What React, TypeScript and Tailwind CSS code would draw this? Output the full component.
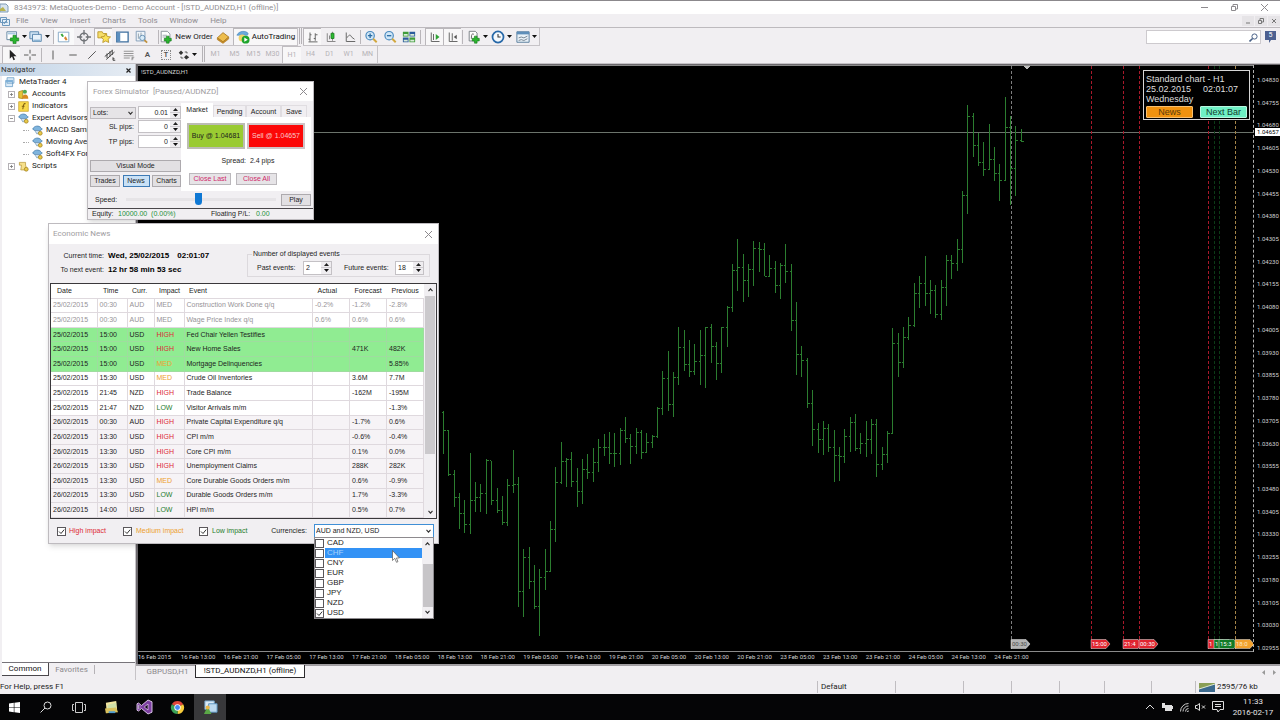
import type { ReactNode } from 'react';
import clsx from 'clsx';

// [high, low, close] of each hourly bar, in chart pixels
const BARS: [number, number, number][] = [
    [345, 388, 364], [364, 410, 408], [404, 441, 431], [427, 463, 447], [434, 467, 458],
    [387, 468, 434], [416, 446, 431], [418, 446, 427], [393, 448, 394], [395, 439, 434],
    [422, 447, 444], [430, 459, 456], [413, 460, 419], [384, 427, 418], [411, 541, 525],
    [483, 551, 491], [481, 523, 515], [499, 543, 540], [503, 570, 511], [483, 524, 505],
    [455, 506, 463], [401, 476, 416], [376, 418, 395], [392, 421, 393], [386, 421, 415],
    [402, 441, 425], [393, 438, 403], [388, 413, 406], [382, 416, 396], [373, 406, 381],
    [368, 390, 381], [366, 398, 387], [367, 401, 387], [362, 399, 364], [351, 377, 372],
    [368, 398, 380], [362, 388, 366], [364, 393, 386], [367, 387, 376], [369, 382, 370],
    [341, 372, 342], [305, 349, 312], [285, 345, 338], [306, 351, 311], [261, 319, 281],
    [264, 305, 298], [274, 311, 305], [278, 309, 295], [264, 319, 289], [261, 322, 261],
    [258, 297, 280], [276, 314, 297], [261, 307, 261], [240, 281, 241], [198, 246, 204],
    [173, 225, 201], [188, 236, 214], [198, 231, 203], [175, 220, 182], [176, 206, 183],
    [177, 210, 210], [189, 211, 202], [195, 227, 219], [197, 233, 199], [178, 217, 205],
    [198, 265, 254], [236, 309, 288], [280, 311, 294], [292, 342, 337], [324, 380, 363],
    [357, 387, 373], [355, 389, 362], [358, 386, 381], [364, 416, 389], [381, 415, 390],
    [363, 397, 370], [351, 386, 356], [348, 385, 382], [367, 388, 377], [355, 391, 373],
    [353, 388, 358], [353, 411, 398], [381, 404, 388], [365, 397, 367], [262, 368, 277],
    [267, 311, 296], [261, 302, 271], [251, 274, 259], [217, 261, 227], [210, 242, 217],
    [190, 240, 227], [214, 248, 224], [219, 252, 248], [214, 254, 221], [189, 240, 194],
    [189, 213, 197], [173, 205, 183], [125, 197, 129], [39, 148, 50], [47, 91, 79],
    [67, 100, 96], [76, 110, 103], [58, 104, 93], [81, 115, 107], [98, 135, 114],
    [31, 115, 61], [50, 139, 102], [60, 130, 74], [63, 76, 75],
];

// labels of flags that sit under their neighbour are cut short
const FLAGS = [
    { x: 873, time: '00:30', fill: '#b4b4b4', ink: '#4b4b4b', line: '#7d7d7d' },
    { x: 953, time: '15:00', fill: '#e0242f', ink: '#ffffff', line: '#a8182a' },
    { x: 985, time: '21:4', fill: '#e0242f', ink: '#ffffff', line: '#a8182a' },
    { x: 1001, time: '00:30', fill: '#e0242f', ink: '#ffffff', line: '#a8182a' },
    { x: 1070, time: '1', fill: '#e0242f', ink: '#ffffff', line: '#a8182a' },
    { x: 1076, time: '1', fill: '#117a26', ink: '#ffffff', line: '#0c3a16' },
    { x: 1081, time: '15:3', fill: '#117a26', ink: '#ffffff', line: '#0c3a16' },
    { x: 1097, time: '18:0', fill: '#f2a12e', ink: '#ffe9c0', line: '#a5854a' },
];

const TIMES = [
    '16 Feb 2015', '16 Feb 13:00', '16 Feb 21:00', '17 Feb 05:00', '17 Feb 13:00', '17 Feb 21:00',
    '18 Feb 05:00', '18 Feb 13:00', '18 Feb 21:00', '19 Feb 05:00', '19 Feb 13:00', '19 Feb 21:00',
    '20 Feb 05:00', '20 Feb 13:00', '20 Feb 21:00', '23 Feb 05:00', '23 Feb 13:00', '23 Feb 21:00',
    '24 Feb 05:00', '24 Feb 13:00', '24 Feb 21:00',
];

const PRICES = Array.from({ length: 26 }, (_, i) => (1.0483 - i * 0.00075).toFixed(5));

const EVENTS = [
    ['25/02/2015', '00:30', 'AUD', 'MED', 'Construction Work Done q/q', '-0.2%', '-1.2%', '-2.8%', 'past'],
    ['25/02/2015', '00:30', 'AUD', 'MED', 'Wage Price Index q/q', '0.6%', '0.6%', '0.6%', 'past'],
    ['25/02/2015', '15:00', 'USD', 'HIGH', 'Fed Chair Yellen Testifies', '', '', '', 'next'],
    ['25/02/2015', '15:00', 'USD', 'HIGH', 'New Home Sales', '', '471K', '482K', 'next'],
    ['25/02/2015', '15:00', 'USD', 'MED', 'Mortgage Delinquencies', '', '', '5.85%', 'next'],
    ['25/02/2015', '15:30', 'USD', 'MED', 'Crude Oil Inventories', '', '3.6M', '7.7M', 'today'],
    ['25/02/2015', '21:45', 'NZD', 'HIGH', 'Trade Balance', '', '-162M', '-195M', 'today'],
    ['25/02/2015', '21:47', 'NZD', 'LOW', 'Visitor Arrivals m/m', '', '', '-1.3%', 'today'],
    ['26/02/2015', '00:30', 'AUD', 'HIGH', 'Private Capital Expenditure q/q', '', '-1.7%', '0.6%', 'later'],
    ['26/02/2015', '13:30', 'USD', 'HIGH', 'CPI m/m', '', '-0.6%', '-0.4%', 'later'],
    ['26/02/2015', '13:30', 'USD', 'HIGH', 'Core CPI m/m', '', '0.1%', '0.0%', 'later'],
    ['26/02/2015', '13:30', 'USD', 'HIGH', 'Unemployment Claims', '', '288K', '282K', 'later'],
    ['26/02/2015', '13:30', 'USD', 'MED', 'Core Durable Goods Orders m/m', '', '0.6%', '-0.9%', 'later'],
    ['26/02/2015', '13:30', 'USD', 'LOW', 'Durable Goods Orders m/m', '', '1.7%', '-3.3%', 'later'],
    ['26/02/2015', '14:00', 'USD', 'LOW', 'HPI m/m', '', '0.5%', '0.7%', 'later'],
];

const IMPACT_COLORS: Record<string, string> = {
    HIGH: 'text-[#dd2a35]',
    MED: 'text-[#eda02f]',
    LOW: 'text-[#1f7d2c]',
};

const ROW_COLORS: Record<string, string> = {
    past: 'text-[#969397]',
    next: 'bg-[#90ec92]',
    today: 'bg-white',
    later: 'bg-[#f6f3f6]',
};

const CURRENCIES = ['CAD', 'CHF', 'CNY', 'EUR', 'GBP', 'JPY', 'NZD', 'USD'];

/* ---------- small shared pieces ---------- */

function Svg({ size = 14, children }: { size?: number; children: ReactNode }) {
    return (
        <svg width={size} height={size} viewBox="0 0 16 16" fill="none" className="shrink-0">
            {children}
        </svg>
    );
}

function Caret() {
    return (
        <svg width="5" height="3" viewBox="0 0 5 3" className="shrink-0">
            <path d="M0 0h5L2.5 3z" fill="#111" />
        </svg>
    );
}

function Chevron({ up = false }: { up?: boolean }) {
    return (
        <svg width="5" height="4" viewBox="0 0 5 4" fill="none" className="shrink-0">
            <path d={up ? 'M.5 3.2l2-2.4 2 2.4' : 'M.5.8l2 2.4 2-2.4'} stroke="#333" strokeWidth="1.1" />
        </svg>
    );
}

function Separator() {
    return <span className="h-3.5 w-px shrink-0 bg-[#b9b6ba]" />;
}

function Grip() {
    return <span className="mx-px h-4 w-[3px] shrink-0 border-x border-[#b5b2b6]" />;
}

function ToolButton({ label, className, pressed, menu, children }: {
    label: string;
    className?: string;
    pressed?: boolean;
    menu?: boolean;
    children: ReactNode;
}) {
    return (
        <button
            type="button"
            aria-label={label}
            aria-pressed={pressed}
            className={clsx(
                'flex h-full shrink-0 items-center justify-center whitespace-nowrap',
                menu && 'gap-0.5',
                pressed && 'border-t border-l border-[#bab7bb] bg-[#f8f7f8]',
                className,
            )}
        >
            {children}
            {menu && <Caret />}
        </button>
    );
}

function CloseX({ className }: { className?: string }) {
    return (
        <button type="button" aria-label="Close" className={className}>
            <svg width="7" height="7" viewBox="0 0 7 7">
                <path d="M0 0l7 7M7 0L0 7" stroke="#8d8a8e" />
            </svg>
        </button>
    );
}

function CheckBox({ id, checked, className }: { id: string; checked?: boolean; className: string }) {
    return (
        <span className={clsx('relative shrink-0', className)}>
            <input
                id={id}
                type="checkbox"
                defaultChecked={checked}
                className="peer block size-full appearance-none border border-[#5a575b] bg-white"
            />
            <svg viewBox="0 0 9 9" fill="none" className="pointer-events-none absolute inset-0 hidden size-full peer-checked:block">
                <path d="M2 4.5l2 2L7.2 2.6" stroke="#333" strokeWidth="1" />
            </svg>
        </span>
    );
}

function SpinBox({ id, value, label, className, inputClass }: {
    id: string;
    value: string;
    label?: string;
    className: string;
    inputClass: string;
}) {
    return (
        <span className={clsx('flex border border-[#c4c1c5] bg-white', className)}>
            <input
                id={id}
                type="text"
                aria-label={label}
                defaultValue={value}
                className={clsx('h-full min-w-0 flex-1 px-0.5 leading-[11px] outline-none', inputClass)}
            />
            <span className="flex w-2.5 shrink-0 flex-col bg-[#efedf0]">
                <button type="button" aria-label="Increase" className="flex flex-1 items-center justify-center">
                    <svg width="5" height="3" viewBox="0 0 5 3"><path d="M0 3h5L2.5 0z" fill="#222" /></svg>
                </button>
                <button type="button" aria-label="Decrease" className="flex flex-1 items-center justify-center border-t border-[#cfccd0]">
                    <Caret />
                </button>
            </span>
        </span>
    );
}

function PushButton({ className, children }: { className: string; children: ReactNode }) {
    return (
        <button type="button" className={clsx('h-3 border text-center leading-[10px]', className)}>
            {children}
        </button>
    );
}

/* ---------- main window chrome ---------- */

function TitleBar() {
    return (
        <header className="flex h-3.5 items-center border-t border-[#8b888c] bg-white text-[#939094]">
            <svg width="10" height="10" viewBox="0 0 10 10" className="mr-1">
                <path d="M0 1h6l2 2v6H0z" fill="#d7e3ee" stroke="#7f9bb5" />
                <path d="M0 6l3-2 3 4H0z" fill="#b8b34f" />
            </svg>
            <h1 className="text-[8px] leading-3">8343973: MetaQuotes-Demo - Demo Account - [!STD_AUDNZD,H1 (offline)]</h1>
            <div className="ml-auto flex items-center">
                <button type="button" aria-label="Minimize" className="flex w-[29px] justify-center">
                    <svg width="7" height="7" viewBox="0 0 7 7"><path d="M0 3.5h7" stroke="#8d8a8e" /></svg>
                </button>
                <button type="button" aria-label="Restore" className="flex w-[30px] justify-center">
                    <svg width="7" height="7" viewBox="0 0 7 7" fill="none"><path d="M.5 2.5h4v4h-4zM2 2V.5h4.5V5H5" stroke="#8d8a8e" /></svg>
                </button>
                <CloseX className="flex w-[31px] justify-center" />
            </div>
        </header>
    );
}

function MenuBar() {
    return (
        <nav className="flex h-[13px] items-center bg-[#f1eff2] text-[8px] leading-3 text-[#908d91]">
            <span className="mr-1.5 flex w-2.5">
                <svg width="10" height="10" viewBox="0 0 10 10" fill="none">
                    <path d="M.5 1.5h6v5h-6zM2.5 3.5h7v6h-7z" fill="#e4eef7" stroke="#6c97bd" />
                    <path d="M4 8l2-3 1.5 2" stroke="#6c97bd" />
                </svg>
            </span>
            <ul className="flex gap-3">
                {['File', 'View', 'Insert', 'Charts', 'Tools', 'Window', 'Help'].map((item) => (
                    <li key={item}><button type="button">{item}</button></li>
                ))}
            </ul>
            <div className="ml-auto flex gap-px">
                <button type="button" aria-label="Minimize chart" className="flex h-2.5 w-3 items-center justify-center bg-[#e6e4e7]">
                    <svg width="6" height="6" viewBox="0 0 6 6"><path d="M1 5h4" stroke="#777" /></svg>
                </button>
                <button type="button" aria-label="Restore chart" className="flex h-2.5 w-3 items-center justify-center bg-[#e6e4e7]">
                    <svg width="6" height="6" viewBox="0 0 6 6" fill="none"><path d="M.5 2.5h3v3h-3zM2 2V.5h3.5V4H4" stroke="#777" /></svg>
                </button>
                <button type="button" aria-label="Close chart" className="flex h-2.5 w-3 items-center justify-center bg-[#e6e4e7]">
                    <svg width="6" height="6" viewBox="0 0 6 6"><path d="M1 1l4 4M5 1L1 5" stroke="#777" /></svg>
                </button>
            </div>
        </nav>
    );
}

function StandardToolbar() {
    return (
        <div className="flex h-[19px] border-t border-[#bdbabe] bg-[#f1eff2]">
            <div className="flex items-center border-r border-b border-[#c6c3c7] pl-1">
                <ToolButton label="New chart" className="w-6" menu>
                    <Svg>
                        <path d="M1 2h11v9H1z" fill="#fff" stroke="#5d7f9d" />
                        <path d="M2 3h9v2H2z" fill="#a9c8e2" />
                        <path d="M8 6h3.5v3h3v3.5h-3v3H8v-3H5V9h3z" fill="#2bb52f" stroke="#15791a" strokeWidth=".7" />
                    </Svg>
                </ToolButton>
                <ToolButton label="Profiles" className="mr-0.5 w-[23px]" menu>
                    <Svg>
                        <path d="M1 2h10v8H1z" fill="#cfe3f3" stroke="#4f7fa8" />
                        <path d="M4 5h10v8H4z" fill="#e8f2fa" stroke="#4f7fa8" />
                        <path d="M5 11h8v2H5z" fill="#8db5d5" />
                    </Svg>
                </ToolButton>
                <Separator />
                <ToolButton label="Market watch" className="w-5 bg-white/60">
                    <Svg>
                        <path d="M1.5 2.5h12v11h-12z" fill="#fff" stroke="#7ea3c4" />
                        <path d="M4 5l2-1 2 3-2 1z" fill="#3aa53c" />
                        <path d="M8 9l2-2 2 4-2 1z" fill="#d9822b" />
                    </Svg>
                </ToolButton>
                <ToolButton label="Data window" className="w-5">
                    <Svg>
                        <circle cx="8" cy="8" r="4.5" stroke="#6d7074" strokeWidth="1.5" />
                        <path d="M8 0v6M8 10v6M0 8h6M10 8h6" stroke="#6d7074" strokeWidth="1.5" />
                    </Svg>
                </ToolButton>
                <ToolButton label="Navigator" className="w-[18px]" pressed>
                    <Svg>
                        <path d="M1 2h5l1 2h4v5H1z" fill="#f5de6b" stroke="#b9962a" />
                        <path d="M10 4l1.700 3.400 3.800.5-2.800 2.600.7 3.800L10 12.500l-3.400 1.800.7-3.800L4.500 7.900l3.800-.5z" fill="#fbe35a" stroke="#b9962a" />
                    </Svg>
                </ToolButton>
                <ToolButton label="Terminal" className="w-[19px]">
                    <Svg>
                        <path d="M2 2.5h13v11H2z" fill="#fff" stroke="#3e6f9e" strokeWidth="1.5" />
                        <path d="M2 3h4v10H2z" fill="#5b8fc0" />
                    </Svg>
                </ToolButton>
                <ToolButton label="Strategy tester" className="mr-2 w-[19px]">
                    <Svg>
                        <path d="M2.5 1.5h10v11h-10z" fill="#eef4f9" stroke="#7b98b3" />
                        <path d="M5 4v6M8 3v6" stroke="#8d9aa6" />
                        <circle cx="9.5" cy="9" r="3" fill="#d8ebf8" stroke="#5c88ae" />
                        <path d="M12 11.5l3 3" stroke="#c0913d" strokeWidth="2" />
                    </Svg>
                </ToolButton>
                <Separator />
                <ToolButton label="New Order" className="w-[54px] gap-0.5 text-[8px] text-[#222]">
                    <Svg>
                        <path d="M2.5 1.5h7l3 3v9h-10z" fill="#fff" stroke="#868e96" />
                        <path d="M4 6h5M4 8h4" stroke="#9aa3ab" />
                        <path d="M8.5 7h3v2.500H14v3h-2.500V15h-3v-2.500H6v-3h2.500z" fill="#2bb52f" stroke="#15791a" strokeWidth=".7" />
                    </Svg>
                    New Order
                </ToolButton>
                <ToolButton label="MetaEditor" className="w-5">
                    <Svg>
                        <path d="M1.5 9L8 3l6.500 5L8 13.500z" fill="#eebd4c" stroke="#a8761c" />
                        <path d="M1.5 9v2L8 15.300l6.500-5V8L8 13.500z" fill="#c98f2c" stroke="#a8761c" strokeWidth=".6" />
                    </Svg>
                </ToolButton>
                <ToolButton label="AutoTrading" className="w-16 gap-0.5 text-[8px] text-[#111]" pressed>
                    <Svg>
                        <path d="M1 6c2-5 10-6 13-2l-1 2H2z" fill="#6aa9dc" stroke="#3b7bb0" strokeWidth=".6" />
                        <circle cx="7" cy="9" r="4" fill="#f0d36a" />
                        <circle cx="11" cy="11" r="4.5" fill="#1fa52b" />
                        <path d="M9.5 8.700l4 2.300-4 2.300z" fill="#fff" />
                    </Svg>
                    AutoTrading
                </ToolButton>
            </div>
            <Grip />
            <div className="flex items-center border-r border-b border-[#c6c3c7]">
                <ToolButton label="Bar chart" className="w-[18px]" pressed>
                    <Svg size={12}><path d="M4 2v12M2 11h2M4 5h2M11 3v10M9 10h2M11 5h3M2 14.500h12" stroke="#666" strokeWidth="1.300" /></Svg>
                </ToolButton>
                <ToolButton label="Candlesticks" className="w-[19px]">
                    <Svg size={12}>
                        <path d="M3 3v11h11M6 6v5M10 1v12" stroke="#666" />
                        <path d="M8 3h4v7H8z" fill="#2dbb33" stroke="#157a1a" />
                    </Svg>
                </ToolButton>
                <ToolButton label="Line chart" className="w-5">
                    <Svg size={12}><path d="M3 2v12h12M4 9c3-5 5-4 6-1l4 3" stroke="#666" strokeWidth="1.300" /></Svg>
                </ToolButton>
                <Separator />
                <ToolButton label="Zoom in" className="w-[19px]">
                    <Svg>
                        <circle cx="7" cy="6.5" r="4.800" fill="#cfe6f7" stroke="#4788bd" strokeWidth="1.300" />
                        <path d="M4.5 6.500h5M7 4v5" stroke="#2b6ca3" strokeWidth="1.500" />
                        <path d="M10.5 10l4 4" stroke="#d2a83f" strokeWidth="2.200" />
                    </Svg>
                </ToolButton>
                <ToolButton label="Zoom out" className="w-[19px]">
                    <Svg>
                        <circle cx="7" cy="6.5" r="4.800" fill="#cfe6f7" stroke="#4788bd" strokeWidth="1.300" />
                        <path d="M4.5 6.500h5" stroke="#2b6ca3" strokeWidth="1.500" />
                        <path d="M10.5 10l4 4" stroke="#d2a83f" strokeWidth="2.200" />
                    </Svg>
                </ToolButton>
                <ToolButton label="Tile windows" className="mr-px w-5">
                    <Svg>
                        <path d="M1 2h6.500v5.500H1z" fill="#3f9b3a" />
                        <path d="M8.5 2H15v5.500H8.500zM1 8.500h6.500V14H1z" fill="#2c5c9c" />
                        <path d="M8.5 8.500H15V14H8.500z" fill="#3f9b3a" />
                        <path d="M2 4.500h4.500V6.500H2zM9.500 4.500H14V6.500H9.500zM2 11h4.500v2H2zM9.500 11H14v2H9.500z" fill="#d9ebd8" />
                    </Svg>
                </ToolButton>
                <Separator />
                <ToolButton label="Auto scroll" className="ml-1 w-[18px]" pressed>
                    <Svg size={12}>
                        <path d="M3 2v12h11M6 4v8" stroke="#666" strokeWidth="1.300" />
                        <path d="M9 4l5 4-5 4z" fill="#2fa336" />
                    </Svg>
                </ToolButton>
                <ToolButton label="Chart shift" className="mr-px w-[18px]" pressed>
                    <Svg size={12}>
                        <path d="M3 2v12h11M7 3v10" stroke="#666" strokeWidth="1.300" />
                        <path d="M9 8l4-3v6z" fill="#555" />
                    </Svg>
                </ToolButton>
                <Separator />
                <ToolButton label="Indicators" className="ml-0.5 w-6" menu>
                    <Svg>
                        <path d="M2.5 1.500h7l2 2v9h-9z" fill="#fff" stroke="#6f767d" />
                        <path d="M5 10c0-6 1-6 3-5" stroke="#555" />
                        <path d="M8.5 7h3v2.500H14v3h-2.500V15h-3v-2.500H6v-3h2.500z" fill="#2bb52f" stroke="#15791a" strokeWidth=".7" />
                    </Svg>
                </ToolButton>
                <ToolButton label="Periods" className="w-[25px]" menu>
                    <Svg>
                        <circle cx="8" cy="8" r="6.300" fill="#f4f9fd" stroke="#2768a8" strokeWidth="2" />
                        <path d="M8 4.500V8h3" stroke="#333" strokeWidth="1.200" />
                    </Svg>
                </ToolButton>
                <ToolButton label="Templates" className="w-[25px]" menu>
                    <Svg>
                        <path d="M1 2h14v12H1z" fill="#e9f1f8" stroke="#4d7396" />
                        <path d="M1 2h14v3H1z" fill="#5f8fba" />
                        <path d="M3 9l3-1 3 1 4-2M3 12l3-1 3 1 4-2" stroke="#6e7c88" />
                    </Svg>
                </ToolButton>
            </div>
            <div className="ml-auto flex items-center">
                <label className="flex h-3.5 w-[115px] items-center border border-[#cdcace] bg-white">
                    <input type="search" aria-label="Search" className="h-full min-w-0 flex-1 px-1 text-[8px] outline-none" />
                    <svg width="9" height="9" viewBox="0 0 9 9" fill="none" className="mr-0.5">
                        <circle cx="5.5" cy="3.5" r="2.600" stroke="#4a6288" />
                        <path d="M3.6 5.500L.5 8.500" stroke="#4a6288" strokeWidth="1.600" />
                    </svg>
                </label>
                <button type="button" aria-label="Chat, 5 messages" className="relative mr-1 ml-1 h-3 w-[11px] text-[7px] leading-[9px] text-white">
                    <svg width="11" height="12" viewBox="0 0 11 12" className="absolute inset-0">
                        <path d="M0 0h11v9H6l-2 3V9H0z" fill="#4c6090" />
                    </svg>
                    <span className="relative block h-full">5</span>
                </button>
            </div>
        </div>
    );
}

function LineToolbar() {
    const periods = ['M1', 'M5', 'M15', 'M30', 'H1', 'H4', 'D1', 'W1', 'MN'];

    return (
        <div className="flex h-[18px] border-b border-[#c6c3c7] bg-[#f1eff2]">
            <div className="flex items-center pl-0.5">
                <ToolButton label="Cursor" className="w-[18px]" pressed>
                    <Svg size={12}><path d="M5 1v12l3-3 2 5 2-1-2-4.500h4z" fill="#222" /></Svg>
                </ToolButton>
                <ToolButton label="Crosshair" className="mr-px w-5">
                    <Svg size={12}><path d="M8 1v5M8 10v5M0 8h6M10 8h6" stroke="#555" strokeWidth="1.300" /></Svg>
                </ToolButton>
                <Separator />
                <ToolButton label="Vertical line" className="w-[22px]">
                    <Svg size={12}><path d="M8 2v12" stroke="#555" strokeWidth="1.300" /></Svg>
                </ToolButton>
                <ToolButton label="Horizontal line" className="w-[18px]">
                    <Svg size={12}><path d="M3 8h10" stroke="#555" strokeWidth="1.300" /></Svg>
                </ToolButton>
                <ToolButton label="Trendline" className="w-[19px]">
                    <Svg size={12}><path d="M3 13L13 3" stroke="#555" strokeWidth="1.300" /></Svg>
                </ToolButton>
                <ToolButton label="Equidistant channel" className="w-[18px]">
                    <Svg size={12}><path d="M1 10L11 2M3 14L14 4M4 6v6M8 3v7M11 1v7M12 11v4h3M12 13h2" stroke="#444" strokeWidth="1.300" /></Svg>
                </ToolButton>
                <ToolButton label="Fibonacci retracement" className="w-[19px]">
                    <Svg size={12}><path d="M1 3h13M1 6h13M1 9h13M1 12h8M12 15v-4h3M12 13h2" stroke="#777" /></Svg>
                </ToolButton>
                <ToolButton label="Text" className="w-[19px]">
                    <span className="text-[8px] font-semibold text-[#555]">A</span>
                </ToolButton>
                <ToolButton label="Text label" className="w-[18px]">
                    <span className="border border-dotted border-[#888] px-0.5 text-[7px] leading-[8px] font-bold text-[#555]">T</span>
                </ToolButton>
                <ToolButton label="Arrows" className="mr-0.5 w-6" menu>
                    <Svg size={12}><path d="M1 5l3-3 3 3-3 3zM8 11l3-3 4 3-4 3z" fill="#333" /><path d="M9 4h3v2M4 10v2h3" stroke="#333" /></Svg>
                </ToolButton>
            </div>
            <Grip />
            <div className="flex items-center border-r border-[#c6c3c7]">
                {periods.map((period) => (
                    <button
                        key={period}
                        type="button"
                        className={clsx(
                            'h-full w-[19px] text-center text-[7px] text-[#b5b2b6]',
                            period === 'H1' && 'border-t border-l border-[#c0bdc1] bg-[#f8f7f8]',
                        )}
                    >
                        {period}
                    </button>
                ))}
            </div>
        </div>
    );
}

/* ---------- navigator ---------- */

function ExpertIcon() {
    return (
        <Svg size={11}>
            <path d="M1 6c2-5 9-6 12-2l2 2-3 2H4z" fill="#7fb4dd" stroke="#3f78a8" />
            <path d="M4 8h8l-2 4-3 1z" fill="#cfe0ee" stroke="#5a87ac" strokeWidth=".8" />
            <circle cx="12" cy="12" r="2.800" fill="#e9c948" stroke="#9b7a1c" />
        </Svg>
    );
}

function TreeItem({ icon, expand, nested, children }: { icon: ReactNode; expand?: string; nested?: boolean; children: ReactNode }) {
    return (
        <li className={clsx('flex h-3 items-center gap-[3px] whitespace-nowrap', nested ? 'pl-[21px]' : 'pl-1.5')}>
            {nested && <span className="w-1.5 shrink-0 border-t border-dotted border-[#aaa]" />}
            {expand && (
                <button type="button" aria-label="Toggle" className="flex size-[7px] shrink-0 items-center justify-center border border-[#b4b1b5] bg-white">
                    <svg width="5" height="5" viewBox="0 0 5 5">
                        <path d={expand === 'plus' ? 'M1 2.5h3M2.5 1v3' : 'M1 2.5h3'} stroke="#777" strokeWidth=".8" />
                    </svg>
                </button>
            )}
            {icon}
            <span>{children}</span>
        </li>
    );
}

function Navigator() {
    return (
        <aside className="flex w-[135px] shrink-0 flex-col bg-[#f1eff2] text-[8px]">
            <div className="flex h-3 items-center justify-between bg-linear-to-r from-[#c3d5e8] to-[#e6ecf3] pr-1 pl-px text-[#333]">
                <h2 className="leading-3">Navigator</h2>
                <button type="button" aria-label="Close navigator">
                    <svg width="5" height="5" viewBox="0 0 5 5"><path d="M.5.5l4 4M4.5.5l-4 4" stroke="#222" strokeWidth="1.200" /></svg>
                </button>
            </div>
            <div className="ml-0.5 flex-1 border-b border-[#77747a] bg-white text-[#1c1c1c]">
                <div className="flex h-3 items-center gap-[3px] pl-[3px]">
                    <Svg size={11}>
                        <path d="M3 1h10v8H3zM1 5h10v9H1z" fill="#dcebf7" stroke="#5b93c0" />
                        <path d="M1 5h10v2.500H1z" fill="#7fb1d9" />
                    </Svg>
                    MetaTrader 4
                </div>
                <ul>
                    <TreeItem expand="plus" icon={
                        <Svg size={11}>
                            <path d="M1 4l6-2v12l-6-1z" fill="#e5c437" stroke="#9a7d16" />
                            <circle cx="10" cy="4" r="3" fill="#52a84f" />
                            <path d="M6 14c0-8 9-8 9 0z" fill="#d98a1f" />
                        </Svg>
                    }>Accounts</TreeItem>
                    <TreeItem expand="plus" icon={
                        <Svg size={11}>
                            <path d="M1 1h14v14H1z" fill="#f7d84a" stroke="#c49c23" />
                            <path d="M11 4c-3-1-3 2-4 8M5.5 7.500h4" stroke="#7d5c10" strokeWidth="1.500" />
                        </Svg>
                    }>Indicators</TreeItem>
                    <TreeItem expand="minus" icon={<ExpertIcon />}>Expert Advisors</TreeItem>
                    <TreeItem nested icon={<ExpertIcon />}>MACD Sample</TreeItem>
                    <TreeItem nested icon={<ExpertIcon />}>Moving Average</TreeItem>
                    <TreeItem nested icon={<ExpertIcon />}>Soft4FX Forex Simulator</TreeItem>
                    <TreeItem expand="plus" icon={
                        <Svg size={11}>
                            <path d="M2 2h9v4l2 7H4l1-7H2z" fill="#f6e08b" stroke="#b3922e" />
                            <circle cx="12" cy="12" r="2.800" fill="#e9c948" stroke="#9b7a1c" />
                        </Svg>
                    }>Scripts</TreeItem>
                </ul>
            </div>
            <div className="mb-1 flex h-[13px] pl-0.5 leading-3">
                <button type="button" className="h-full w-[47px] border-r border-b border-[#4a474b] bg-white text-center text-[#111]">Common</button>
                <button type="button" className="my-0.5 flex w-[46px] items-center justify-center border-r border-[#b5b2b6] text-[#8c898d]">Favorites</button>
            </div>
        </aside>
    );
}

/* ---------- chart ---------- */

function Chart() {
    return (
        <section aria-label="AUDNZD H1 chart" className="flex flex-1 flex-col border-t border-l-2 border-[#6b686c] bg-black text-[6px] leading-[8px] text-[#d2d2d2]">
            <div className="flex flex-1">
                <div className="relative flex-1 overflow-hidden border-t border-b border-[#8a8a8a]">
                    <svg className="absolute inset-0 size-full" shapeRendering="crispEdges">
                        <path d="M0 66.5h2000" stroke="#6c746c" />
                        {FLAGS.map((flag) => (
                            <path key={flag.x} d={`M${flag.x + 0.5} 0v2000`} stroke={flag.line} strokeDasharray="3 2" />
                        ))}
                        {BARS.map(([high, low, close], i) => {
                            const x = Math.round(305 + i * 5.35);
                            const open = i === 0 ? 346 : BARS[i - 1][2];
                            return (
                                <g key={i}>
                                    <path d={`M${x + 0.5} ${high}V${low}`} stroke="#2b7d2f" />
                                    <path d={`M${x - 1} ${open + 0.5}h1M${x + 1} ${close + 0.5}h2`} stroke="#2b7d2f" />
                                </g>
                            );
                        })}
                        <path d="M886 0h6l-3 4z" fill="#bdbdbd" />
                        <g shapeRendering="auto">
                            {FLAGS.map((flag) => (
                                <g key={flag.x}>
                                    <path d={`M${flag.x} 573.5h15l4 4.500-4 4.500h-15z`} fill={flag.fill} stroke="#e6e6e6" strokeWidth=".5" />
                                    <text x={flag.x + 1} y="580" fontSize="6" fill={flag.ink}>{flag.time}</text>
                                </g>
                            ))}
                        </g>
                    </svg>
                    <p className="relative p-0.5 pl-[3px]">!STD_AUDNZD,H1</p>
                    <div className="absolute top-1 right-[3px] w-[107px] border border-[#d6d6d6] bg-black px-0.5 pt-[3px] pb-px font-['Liberation_Sans',Arial,sans-serif] text-[9px] leading-[10px] text-[#dedede]">
                        <p>Standard chart - H1</p>
                        <p className="flex gap-3"><span>25.02.2015</span><span>02:01:07</span></p>
                        <p>Wednesday</p>
                        <div className="mt-0.5 flex justify-between">
                            <button type="button" className="h-3 w-[47px] rounded-[1px] border border-[#f8c070] bg-[#f0920f] text-[#5a3b0c]">News</button>
                            <button type="button" className="h-3 w-[47px] rounded-[1px] border border-[#b9f7e0] bg-[#6ef0c4] text-[#153a2e]">Next Bar</button>
                        </div>
                    </div>
                </div>
                <div className="relative w-[27px] border-l border-dashed border-[#b0b0b0]">
                    <ol className="-mb-0.5 flex h-full flex-col justify-between pt-[11px] pl-[3px]">
                        {PRICES.map((price) => <li key={price}>{price}</li>)}
                    </ol>
                    <strong className="absolute top-[63px] left-px w-[26px] bg-white pl-0.5 font-normal text-black">1.04657</strong>
                </div>
            </div>
            <ol className="grid h-3 w-[899px] grid-cols-[repeat(21,minmax(0,1fr))] whitespace-nowrap">
                {TIMES.map((time) => <li key={time} className="pt-px">{time}</li>)}
            </ol>
        </section>
    );
}

function ChartTabs() {
    return (
        <div className="flex h-4 items-start justify-between border-t-2 border-[#a19ea2] bg-[#f1eff2] text-[8px] leading-3">
            <div className="flex pl-1">
                <button type="button" className="w-[55px] text-center text-[#8c898d]">GBPUSD,H1</button>
                <button type="button" className="-mt-px h-[13px] w-[110px] border border-t-0 border-[#2d2b2e] bg-white text-center text-[#111]">!STD_AUDNZD,H1 (offline)</button>
            </div>
            <div className="flex gap-2 pt-1 pr-1">
                <button type="button" aria-label="Scroll left"><svg width="3" height="5" viewBox="0 0 3 5"><path d="M3 0v5L0 2.500z" fill="#999" /></svg></button>
                <button type="button" aria-label="Scroll right"><svg width="3" height="5" viewBox="0 0 3 5"><path d="M0 0v5l3-2.500z" fill="#999" /></svg></button>
            </div>
        </div>
    );
}

function StatusBar() {
    return (
        <footer className="flex h-3.5 items-center justify-between bg-[#f1eff2] text-[8px] leading-3 text-[#222]">
            <span>For Help, press F1</span>
            <div className="flex h-3 items-center">
                <span className="h-full w-[78px] border-l border-[#c0bdc1] pl-[3px]">Default</span>
                <span className="h-full w-[68px] border-l border-[#c0bdc1]" />
                <span className="h-full w-12 border-l border-[#c0bdc1]" />
                <span className="h-full w-12 border-l border-[#c0bdc1]" />
                <span className="h-full w-[45px] border-l border-[#c0bdc1]" />
                <span className="h-full w-[47px] border-l border-[#c0bdc1]" />
                <span className="h-full w-11 border-l border-[#c0bdc1]" />
                <span className="flex h-full w-[85px] items-center gap-0.5 border-l border-[#c0bdc1] pl-[3px]">
                    <svg width="16" height="9" viewBox="0 0 16 9">
                        <path d="M0 0h16v9H0z" fill="#8a9f56" />
                        <path d="M0 9V6l16-5v8z" fill="#3c6a8e" />
                        <path d="M0 6l16-5" stroke="#dfe8d0" />
                    </svg>
                    2595/76 kb
                </span>
            </div>
        </footer>
    );
}

/* ---------- forex simulator window ---------- */

function SimulatorWindow() {
    return (
        <section aria-label="Forex Simulator" className="absolute top-[81px] left-[87px] w-[227px] border border-[#bebbbf] bg-[#f1eff2] font-['Liberation_Sans',Arial,sans-serif] text-[7px] leading-[10px] text-[#1d1d1d] shadow-md">
            <div className="flex h-[19px] items-center justify-between bg-white pr-1.5 pl-[5px] font-[Roboto,'Open_Sans',sans-serif] text-[8px] text-[#a09da1]">
                <h2 className="whitespace-pre">Forex Simulator  [Paused/AUDNZD]</h2>
                <CloseX />
            </div>
            <div className="flex justify-between px-0.5 pt-0.5">
                <div className="flex w-[91px] flex-col">
                    <div className="flex h-[15px] items-center justify-between pt-1">
                        <span className="relative w-[46px]">
                            <select aria-label="Volume unit" className="h-3 w-full appearance-none border border-[#bdbabe] bg-[#e6e4e7] pl-0.5">
                                <option>Lots:</option>
                            </select>
                            <span className="pointer-events-none absolute top-1 right-[3px]"><Chevron /></span>
                        </span>
                        <SpinBox id="lots" label="Volume" value="0.01" className="h-[13px] w-[43px]" inputClass="text-right" />
                    </div>
                    <div className="mt-0.5 flex items-center justify-end gap-1">
                        <label htmlFor="sl">SL pips:</label>
                        <SpinBox id="sl" value="0" className="h-[13px] w-[43px]" inputClass="text-right" />
                    </div>
                    <div className="mt-0.5 flex items-center justify-end gap-1">
                        <label htmlFor="tp">TP pips:</label>
                        <SpinBox id="tp" value="0" className="h-[13px] w-[43px]" inputClass="text-right" />
                    </div>
                    <PushButton className="mt-3 border-[#adaaae] bg-[#e2e0e3]">Visual Mode</PushButton>
                    <div className="mt-[3px] flex justify-between">
                        <PushButton className="w-[30px] border-[#adaaae] bg-[#e2e0e3]">Trades</PushButton>
                        <PushButton className="w-[27px] border-[#3d7ab5] bg-[#c9e1f6]">News</PushButton>
                        <PushButton className="w-[29px] border-[#adaaae] bg-[#e2e0e3]">Charts</PushButton>
                    </div>
                </div>
                <div className="w-[130px]">
                    <div className="flex h-3.5 items-end">
                        <button type="button" className="h-3.5 w-8 bg-white">Market</button>
                        <button type="button" className="h-3 w-[33px] border border-b-0 border-[#e0dde1]">Pending</button>
                        <button type="button" className="h-3 w-[35px] border border-b-0 border-[#e0dde1]">Account</button>
                        <button type="button" className="h-3 w-[26px] border border-b-0 border-[#e0dde1]">Save</button>
                    </div>
                    <div className="bg-white px-1.5 pt-1.5 pb-1.5">
                        <div className="flex gap-0.5">
                            <button type="button" className="h-[26px] w-[59px] border-2 border-[#bcbcb4] bg-[#9acb32] whitespace-nowrap">Buy @ 1.04681</button>
                            <button type="button" className="h-[26px] w-[59px] border-2 border-[#cfc4c6] bg-[#fc0707] whitespace-nowrap text-[#f9c9c9]">Sell @ 1.04657</button>
                        </div>
                        <p className="mt-[7px] pl-1 text-center">Spread:&nbsp; 2.4 pips</p>
                        <div className="mt-[7px] flex gap-[5px] pl-0.5 text-[#d0286a]">
                            <PushButton className="w-[42px] border-[#bbb8bc] bg-[#e6e4e7]">Close Last</PushButton>
                            <PushButton className="w-[41px] border-[#bbb8bc] bg-[#e6e4e7]">Close All</PushButton>
                        </div>
                    </div>
                </div>
            </div>
            <div className="flex h-[17px] items-center pr-0.5 pl-[7px]">
                <label htmlFor="speed" className="w-[31px]">Speed:</label>
                <input
                    id="speed"
                    type="range"
                    defaultValue={48}
                    className="h-3 w-[150px] appearance-none bg-transparent [&::-webkit-slider-runnable-track]:h-[3px] [&::-webkit-slider-runnable-track]:bg-[#e6e4e7] [&::-webkit-slider-thumb]:-mt-[5px] [&::-webkit-slider-thumb]:h-3 [&::-webkit-slider-thumb]:w-[7px] [&::-webkit-slider-thumb]:appearance-none [&::-webkit-slider-thumb]:rounded-b-sm [&::-webkit-slider-thumb]:bg-[#0f78d4]"
                />
                <PushButton className="ml-auto w-[30px] border-[#adaaae] bg-[#e2e0e3]">Play</PushButton>
            </div>
            <div className="flex h-[11px] border-t border-[#4a474b] pl-1">
                <span className="w-[26px]">Equity:</span>
                <output className="w-[93px] text-[#24903a]">10000.00&nbsp; (0.00%)</output>
                <span className="w-[45px]">Floating P/L:</span>
                <output className="text-[#24903a]">0.00</output>
            </div>
        </section>
    );
}

/* ---------- economic news window ---------- */

function NewsTable() {
    return (
        <div className="mx-px flex h-[236px] border border-[#3a383b] bg-white">
            <table className="h-full flex-1 table-fixed border-collapse text-left whitespace-nowrap">
                <thead>
                    <tr className="h-3.5">
                        <th className="w-[46px] pl-1.5 font-normal">Date</th>
                        <th className="w-[30px] pl-1.5 font-normal">Time</th>
                        <th className="w-[27px] pl-[5px] font-normal">Curr.</th>
                        <th className="w-[30px] pl-[5px] font-normal">Impact</th>
                        <th className="pl-[5px] font-normal">Event</th>
                        <th className="w-[37px] pl-[5px] font-normal">Actual</th>
                        <th className="w-[37px] pl-[5px] font-normal">Forecast</th>
                        <th className="w-[37px] pl-[5px] font-normal">Previous</th>
                    </tr>
                </thead>
                <tbody>
                    {EVENTS.map(([date, time, currency, impact, title, actual, forecast, previous, kind]) => (
                        <tr key={date + time + title} className={ROW_COLORS[kind]}>
                            {[date, time, currency, impact, title, actual, forecast, previous].map((value, i) => (
                                <td
                                    key={i}
                                    className={clsx(
                                        'border pl-0.5 first:border-l-0',
                                        kind === 'next' ? 'border-[#9fdc9f]' : 'border-[#dfd9de]',
                                        i === 3 && kind !== 'past' && IMPACT_COLORS[impact],
                                    )}
                                >
                                    {value}
                                </td>
                            ))}
                        </tr>
                    ))}
                </tbody>
            </table>
            <div className="flex w-3 shrink-0 flex-col items-center justify-between bg-[#f1eff2] pt-1">
                <Chevron up />
                <span className="mt-1 h-[158px] w-2.5 bg-[#cbc9cc]" />
                <span className="mt-auto mb-1 flex"><Chevron /></span>
            </div>
        </div>
    );
}

function CurrencyList() {
    return (
        <div className="absolute top-full right-0 -mt-px flex h-[82px] w-full border border-[#8d8a8e] bg-white text-[8px] leading-[10px]">
            <ul className="flex-1">
                {CURRENCIES.map((currency) => (
                    <li key={currency} className="flex h-2.5 items-center gap-px">
                        <CheckBox id={`currency-${currency}`} checked={currency === 'USD'} className="size-[9px]" />
                        <label
                            htmlFor={`currency-${currency}`}
                            className={clsx('flex-1 pl-0.5', currency === 'CHF' && 'bg-[#3392f5] text-[#a9d3fb]')}
                        >
                            {currency}
                        </label>
                    </li>
                ))}
            </ul>
            <div className="flex w-[11px] flex-col items-center bg-[#f1eff2] py-1">
                <Chevron up />
                <span className="mt-[18px] h-[43px] w-2.5 bg-[#c7c5c8]" />
                <span className="mt-auto flex"><Chevron /></span>
            </div>
            <svg width="8" height="13" viewBox="0 0 8 13" className="absolute top-3 left-[77px]">
                <path d="M.5.5v10l2.300-2.200 1.700 4 1.500-.7L4.400 8h3z" fill="#fff" stroke="#555" strokeWidth=".7" />
            </svg>
        </div>
    );
}

function NewsWindow() {
    return (
        <section aria-label="Economic News" className="absolute top-[223px] left-12 w-[391px] border border-[#bebbbf] bg-[#f1eff2] font-['Liberation_Sans',Arial,sans-serif] text-[7px] leading-[10px] text-[#1d1d1d] shadow-md">
            <div className="flex h-5 items-center justify-between bg-white pr-1.5 pl-1 font-[Roboto,'Open_Sans',sans-serif] text-[8px] text-[#a09da1]">
                <h2>Economic News</h2>
                <CloseX />
            </div>
            <div className="flex h-[39px] justify-between pr-2">
                <dl className="grid grid-cols-[55px_auto] content-start gap-x-1 gap-y-1 pt-[7px]">
                    <dt className="text-right">Current time:</dt>
                    <dd className="flex gap-2 text-[8px] font-bold text-black">
                        <span>Wed, 25/02/2015</span>
                        <span>02:01:07</span>
                    </dd>
                    <dt className="text-right">To next event:</dt>
                    <dd className="text-[8px] font-bold text-black">12 hr 58 min 53 sec</dd>
                </dl>
                <fieldset className="mt-[5px] flex h-7 w-[183px] items-center border border-[#dcd9dd] pl-[9px]">
                    <legend className="-ml-[5px] px-px">Number of displayed events</legend>
                    <label htmlFor="past" className="w-[46px]">Past events:</label>
                    <SpinBox id="past" value="2" className="h-3.5 w-[29px]" inputClass="text-left" />
                    <label htmlFor="future" className="ml-3 w-[51px]">Future events:</label>
                    <SpinBox id="future" value="18" className="h-3.5 w-[29px]" inputClass="text-left" />
                </fieldset>
            </div>
            <NewsTable />
            <div className="flex h-6 items-center pr-1 pl-2">
                <CheckBox id="high" checked className="size-[9px]" />
                <label htmlFor="high" className="w-[57px] pl-[3px] text-[#dd2a35]">High impact</label>
                <CheckBox id="medium" checked className="size-[9px]" />
                <label htmlFor="medium" className="w-[67px] pl-1 text-[#eda02f]">Medium impact</label>
                <CheckBox id="low" checked className="size-[9px]" />
                <label htmlFor="low" className="pl-1 text-[#1f7d2c]">Low impact</label>
                <label htmlFor="currencies" className="ml-auto pr-[7px]">Currencies:</label>
                <div className="relative w-[120px]">
                    <select id="currencies" className="block h-3.5 w-full appearance-none border border-[#3f8fd6] bg-white pl-px">
                        <option>AUD and NZD, USD</option>
                    </select>
                    <span className="pointer-events-none absolute top-[5px] right-[3px]"><Chevron /></span>
                    <CurrencyList />
                </div>
            </div>
        </section>
    );
}

/* ---------- taskbar ---------- */

function Taskbar() {
    return (
        <footer className="flex h-[26px] items-center justify-between bg-[#050506] text-[8px] leading-[11px] text-[#e6e6e6]">
            <div className="flex h-full pr-4">
                <button type="button" aria-label="Start" className="flex w-[29px] items-center justify-center">
                    <svg width="11" height="11" viewBox="0 0 11 11"><path d="M0 1.500L4.800.8v4.400H0zM5.400.7L11 0v5.200H5.400zM0 5.800h4.800v4.400L0 9.500zM5.400 5.800H11V11l-5.600-.8z" fill="#fff" /></svg>
                </button>
                <button type="button" aria-label="Search" className="flex w-[34px] items-center justify-center">
                    <svg width="12" height="12" viewBox="0 0 12 12" fill="none"><circle cx="7.5" cy="4.500" r="3.500" stroke="#ddd" /><path d="M5 7l-4.500 4.500" stroke="#ddd" /></svg>
                </button>
                <button type="button" aria-label="Task view" className="flex w-[31px] items-center justify-center">
                    <svg width="14" height="11" viewBox="0 0 14 11" fill="none"><path d="M3.5.5h7v10h-7zM2 2.500H.5v6H2M12 2.500h1.500v6H12" stroke="#ccc" /></svg>
                </button>
                <button type="button" aria-label="File Explorer" className="flex w-[34px] items-center justify-center">
                    <Svg size={15}>
                        <path d="M2 3l11-2 1 9-11 4z" fill="#f2e6a0" />
                        <path d="M4 5l9-2v7l-9 3z" fill="#cfe0a8" />
                        <path d="M1 9l12-1 2 5-13 1z" fill="#d9c15c" />
                        <path d="M5 12h7v2H5z" fill="#4f9ccf" />
                    </Svg>
                </button>
                <button type="button" aria-label="Visual Studio" className="flex w-8 items-center justify-center">
                    <svg width="17" height="16" viewBox="0 0 17 16" fill="none">
                        <path d="M12 1l4 1.800v10.400L12 15 5.500 9.500 2.500 12 1 11.200V4.800L2.500 4l3 2.500z" fill="#7c3fa0" stroke="#e6d3f0" strokeWidth=".9" />
                        <path d="M12 5v6L8.300 8zM2.500 6.200v3.600L4.400 8z" fill="#120818" stroke="#e6d3f0" strokeWidth=".7" />
                    </svg>
                </button>
                <button type="button" aria-label="Chrome" className="flex w-[34px] items-center justify-center">
                    <Svg size={15}>
                        <path d="M8 8L1.900 4.500a7 7 0 0 1 12.200 0z" fill="#e0453a" />
                        <path d="M8 8l6.100-3.500A7 7 0 0 1 8 15z" fill="#f7cc3b" />
                        <path d="M8 8v7A7 7 0 0 1 1.900 4.500z" fill="#3aa257" />
                        <circle cx="8" cy="8" r="3.400" fill="#fff" />
                        <circle cx="8" cy="8" r="2.600" fill="#4a8af4" />
                    </Svg>
                </button>
                <button type="button" aria-label="MetaTrader 4" className="flex w-8 items-center justify-center bg-[#38383a]">
                    <Svg size={15}>
                        <path d="M2 1h10v9H2z" fill="#dcebf7" stroke="#6fa0c8" />
                        <path d="M6 4h9v9H6z" fill="#bcd9ef" stroke="#5b93c0" />
                        <path d="M1 15l4-8 4 8z" fill="#5aa746" />
                        <circle cx="5" cy="8" r="2.200" fill="#e9b64a" />
                    </Svg>
                </button>
            </div>
            <div className="flex items-center">
                <svg width="10" height="6" viewBox="0 0 10 6" fill="none" className="mr-[7px]"><path d="M1 5l4-4 4 4" stroke="#ddd" /></svg>
                <svg width="11" height="8" viewBox="0 0 11 8" className="mr-[7px]"><path d="M0 0h3v2h7v1h1v3h-1v2H3V5H0z" fill="#e0e0e0" /></svg>
                <svg width="9" height="9" viewBox="0 0 9 9" fill="none" className="mr-1.5"><path d="M.5 8.500a8 8 0 0 1 8-8M3 8.500A5.500 5.500 0 0 1 8.500 3M5.500 8.500a3 3 0 0 1 3-3" stroke="#ccc" /><path d="M8.500 7v2H6.500z" fill="#ccc" /></svg>
                <svg width="11" height="8" viewBox="0 0 11 8" fill="none" className="mr-1.5"><path d="M.5 2.500H2l2.500-2v7L2 5.500H.5zM7 2.500l3 3M10 2.500l-3 3" stroke="#ddd" /></svg>
                <svg width="12" height="12" viewBox="0 0 12 12" fill="none"><path d="M.5.5h11v8H8L6 11 5 8.500H.5zM3 3.500h6M3 5.500h6" stroke="#ddd" /></svg>
                <time dateTime="2016-02-17T11:33" className="w-14 pl-0.5 text-center">
                    <span className="block">11:33</span>
                    <span className="block">2016-02-17</span>
                </time>
            </div>
        </footer>
    );
}

export default function App() {
    return (
        <div className="relative flex min-h-screen flex-col overflow-hidden bg-[#f1eff2] font-[Roboto,'Open_Sans',sans-serif]">
            <TitleBar />
            <MenuBar />
            <StandardToolbar />
            <LineToolbar />
            <main className="flex flex-1">
                <Navigator />
                <div className="flex min-w-0 flex-1 flex-col border-l border-[#c6c3c7]">
                    <Chart />
                    <ChartTabs />
                </div>
            </main>
            <StatusBar />
            <Taskbar />
            <SimulatorWindow />
            <NewsWindow />
        </div>
    );
}
